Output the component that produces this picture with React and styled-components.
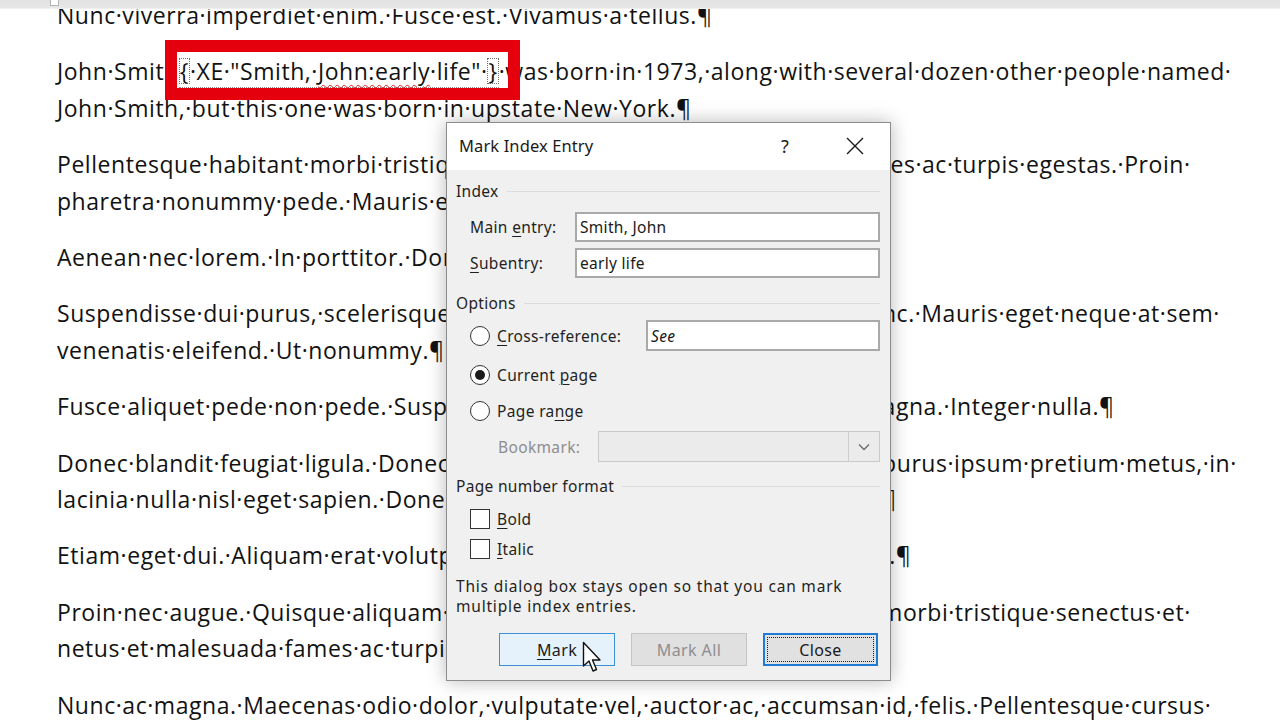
import React from 'react';
import styled, { createGlobalStyle } from 'styled-components';

const Global = createGlobalStyle`
  html, body { margin: 0; padding: 0; background: #fff; }
  body { width: 1280px; height: 720px; overflow: hidden; }
`;

const Screen = styled.div`
  position: relative;
  width: 1280px;
  height: 720px;
  overflow: hidden;
  background: #fff;
  display: flex;
  flex-direction: column;
`;

const RibbonEdge = styled.div`
  flex: none;
  height: 8px;
  background: linear-gradient(#e2e2e2, #e7e7e7);
  border-bottom: 1px solid #efefef;
  position: relative;
  z-index: 2;
  display: flex;
  align-items: flex-start;
`;

const CornerMark = styled.div`
  margin-left: 50px;
  width: 7px;
  height: 5px;
  background: #fff;
  border: 1px solid #b5b5b5;
  border-top: none;
`;

const DocViewport = styled.div`
  flex: 1;
  overflow: hidden;
`;

const Page = styled.div`
  margin-top: -12px;
  padding-left: 57px;
  font-family: "Open Sans", "Noto Sans", sans-serif;
  font-size: 23px;
  letter-spacing: 0.55px;
  line-height: 36.4px;
  color: #121212;
  white-space: nowrap;
`;

const Para = styled.p`
  margin: 0 0 20px;
`;

const Line = styled.span`
  display: block;
`;

const Field = styled.span`
  border-bottom: 1.5px dotted #8a8a8a;
`;

const Brace = styled.span`
  display: inline-block;
  line-height: 26px;
  padding: 0 1px;
  outline: 1px dotted #6f6f6f;
  outline-offset: -1px;
`;

const Misspelt = styled.span`
  text-decoration: underline wavy #e02020;
  text-decoration-thickness: 1px;
  text-underline-offset: 4px;
`;

const Highlight = styled.div`
  position: absolute;
  left: 165px;
  top: 40px;
  width: 355px;
  height: 60px;
  box-sizing: border-box;
  border: 12px solid #e4000c;
  z-index: 3;
`;

const Dialog = styled.div`
  position: absolute;
  left: 446px;
  top: 122px;
  width: 445px;
  height: 559px;
  box-sizing: border-box;
  border: 1px solid #8c8c8c;
  background: #f0f0f0;
  box-shadow: 0 0 18px rgba(0, 0, 0, 0.28);
  z-index: 4;
  display: flex;
  flex-direction: column;
  font-family: "Noto Sans", "Open Sans", sans-serif;
  color: #1a1a1a;
`;

const TitleBar = styled.div`
  flex: none;
  height: 47px;
  background: #fff;
  display: flex;
  align-items: center;
  padding-left: 12px;
`;

const Title = styled.div`
  flex: 1;
  font-size: 16.5px;
  color: #1a1a1a;
  letter-spacing: 0.1px;
  margin-top: -2px;
`;

const TitleButton = styled.div`
  width: ${p => p.$w}px;
  height: 47px;
  display: flex;
  align-items: center;
  justify-content: center;
  font-size: 18px;
  color: #222;
  margin-top: -2px;
`;

const Body = styled.div`
  flex: 1;
  display: flex;
  flex-direction: column;
  padding: 0 10px 0 9px;
`;

const GroupHeader = styled.div`
  height: 20px;
  margin-top: ${p => p.$mt}px;
  display: flex;
  align-items: center;
  gap: 8px;
  font-size: 15.5px;
  letter-spacing: 0.3px;
  color: #1f1f1f;
  &::after {
    content: "";
    flex: 1;
    height: 1px;
    background: #dcdcdc;
  }
`;

const FieldRow = styled.div`
  display: flex;
  align-items: center;
  margin-top: ${p => p.$mt}px;
  padding-left: ${p => p.$pl || 14}px;
`;

const Label = styled.div`
  width: ${p => p.$w}px;
  flex: none;
  font-size: 15.5px;
  letter-spacing: 0.35px;
  color: ${p => (p.$disabled ? '#8d8d8d' : '#1f1f1f')};
`;

const Key = styled.span`
  text-decoration: underline;
  text-underline-offset: 3px;
  text-decoration-thickness: 1px;
`;

const TextBox = styled.div`
  flex: 1;
  height: ${p => p.$h || 30}px;
  box-sizing: border-box;
  background: #fff;
  border: 2px solid #a9a9a9;
  display: flex;
  align-items: center;
  padding-left: 3px;
  font-size: 15.5px;
  letter-spacing: 0.3px;
  font-style: ${p => (p.$italic ? 'italic' : 'normal')};
  color: #1a1a1a;
`;

const Combo = styled.div`
  flex: 1;
  height: 31px;
  box-sizing: border-box;
  background: #ebebeb;
  border: 1px solid #c9c9c9;
  display: flex;
  justify-content: flex-end;
`;

const ComboArrow = styled.div`
  width: 30px;
  border-left: 1px solid #cdcdcd;
  display: flex;
  align-items: center;
  justify-content: center;
`;

const OptionRow = styled.div`
  display: flex;
  align-items: center;
  height: ${p => p.$h}px;
  margin-top: ${p => p.$mt || 0}px;
  padding-left: 14px;
  gap: 7px;
  font-size: 15.5px;
  letter-spacing: 0.35px;
  color: #1f1f1f;
`;

const Radio = styled.div`
  width: 20px;
  height: 20px;
  box-sizing: border-box;
  border-radius: 50%;
  border: 1.5px solid #333;
  background: #fff;
  flex: none;
  display: flex;
  align-items: center;
  justify-content: center;
  &::after {
    content: "";
    width: 10px;
    height: 10px;
    border-radius: 50%;
    background: ${p => (p.$checked ? '#1a1a1a' : 'transparent')};
  }
`;

const Check = styled.div`
  width: 20px;
  height: 20px;
  box-sizing: border-box;
  border: 1.5px solid #333;
  background: #fff;
  flex: none;
`;

const CrossBox = styled.div`
  width: 234px;
  margin-left: auto;
  display: flex;
`;

const Note = styled.div`
  margin-top: 12px;
  font-size: 15.5px;
  line-height: 20px;
  letter-spacing: 0.8px;
  color: #1f1f1f;
`;

const ButtonRow = styled.div`
  margin-top: 17px;
  display: flex;
  justify-content: flex-end;
  gap: 16px;
  padding-right: 2px;
`;

const Button = styled.div`
  position: relative;
  width: ${p => p.$w}px;
  height: 33px;
  box-sizing: border-box;
  display: flex;
  align-items: center;
  justify-content: center;
  font-size: 16px;
  letter-spacing: 0.4px;
  color: ${p => (p.$variant === 'disabled' ? '#8e8e8e' : '#1a1a1a')};
  background: ${p =>
    p.$variant === 'hover' ? '#e5f1fb' : p.$variant === 'disabled' ? '#e0e0e0' : '#e1e1e1'};
  border: ${p =>
    p.$variant === 'hover'
      ? '1.5px solid #3d8fd6'
      : p.$variant === 'disabled'
      ? '1.5px solid #c4c4c4'
      : '2px solid #1f7bd4'};
  &::before {
    content: "";
    display: ${p => (p.$variant === 'default' ? 'block' : 'none')};
    position: absolute;
    inset: 2px;
    border: 1px dotted #222;
  }
`;

const Cursor = styled.svg`
  position: absolute;
  left: 582px;
  top: 641px;
  z-index: 5;
`;

const docParas = [
  ['Nunc·viverra·imperdiet·enim.·Fusce·est.·Vivamus·a·tellus.¶'],
  'john',
  [
    'Pellentesque·habitant·morbi·tristique·senectus·et·netus·et·malesuada·fames·ac·turpis·egestas.·Proin·',
    'pharetra·nonummy·pede.·Mauris·et·orci.¶',
  ],
  ['Aenean·nec·lorem.·In·porttitor.·Donec·laoreet·nonummy·augue.¶'],
  [
    'Suspendisse·dui·purus,·scelerisque·at,·vulputate·vitae,·pretium·mattis,·nunc.·Mauris·eget·neque·at·sem·',
    'venenatis·eleifend.·Ut·nonummy.¶',
  ],
  ['Fusce·aliquet·pede·non·pede.·Suspendisse·dapibus·lorem·pellentesque·magna.·Integer·nulla.¶'],
  [
    'Donec·blandit·feugiat·ligula.·Donec·hendrerit,·felis·et·imperdiet·euismod,·purus·ipsum·pretium·metus,·in·',
    'lacinia·nulla·nisl·eget·sapien.·Donec·ut·est·in·lectus·consequat·consequat.¶',
  ],
  ['Etiam·eget·dui.·Aliquam·erat·volutpat.·Sed·at·lorem·in·nunc·porta·tristique.¶'],
  [
    'Proin·nec·augue.·Quisque·aliquam·tempor·magna.·Pellentesque·habitant·morbi·tristique·senectus·et·',
    'netus·et·malesuada·fames·ac·turpis·egestas.¶',
  ],
  ['Nunc·ac·magna.·Maecenas·odio·dolor,·vulputate·vel,·auctor·ac,·accumsan·id,·felis.·Pellentesque·cursus·'],
];

function JohnPara() {
  return (
    <Para>
      <Line>
        John·Smith
        <Field>
          <Brace>{'{'}</Brace>·XE·"Smith,·<Misspelt>John:early</Misspelt>·life"·<Brace>{'}'}</Brace>
        </Field>
        ·was·born·in·1973,·along·with·several·dozen·other·people·named·
      </Line>
      <Line>John·Smith,·but·this·one·was·born·in·upstate·New·York.¶</Line>
    </Para>
  );
}

function CloseIcon() {
  return (
    <svg width="18" height="18" viewBox="0 0 18 18">
      <path d="M1 1 L17 17 M17 1 L1 17" stroke="#1a1a1a" strokeWidth="1.4" fill="none" />
    </svg>
  );
}

function Chevron() {
  return (
    <svg width="12" height="8" viewBox="0 0 12 8">
      <path d="M1 1.5 L6 6.5 L11 1.5" stroke="#6b6b6b" strokeWidth="1.3" fill="none" />
    </svg>
  );
}

export default function App() {
  return (
    <>
      <Global />
      <Screen>
        <RibbonEdge>
          <CornerMark />
        </RibbonEdge>
        <DocViewport>
          <Page>
            {docParas.map((p, i) =>
              p === 'john' ? (
                <JohnPara key={i} />
              ) : (
                <Para key={i}>
                  {p.map((l, j) => (
                    <Line key={j}>{l}</Line>
                  ))}
                </Para>
              )
            )}
          </Page>
        </DocViewport>

        <Highlight />

        <Dialog>
          <TitleBar>
            <Title>Mark Index Entry</Title>
            <TitleButton $w={70}>?</TitleButton>
            <TitleButton $w={70}>
              <CloseIcon />
            </TitleButton>
          </TitleBar>
          <Body>
            <GroupHeader $mt={11}>Index</GroupHeader>
            <FieldRow $mt={11}>
              <Label $w={105}>
                Main <Key>e</Key>ntry:
              </Label>
              <TextBox>Smith, John</TextBox>
            </FieldRow>
            <FieldRow $mt={6}>
              <Label $w={105}>
                <Key>S</Key>ubentry:
              </Label>
              <TextBox>early life</TextBox>
            </FieldRow>

            <GroupHeader $mt={15}>Options</GroupHeader>
            <OptionRow $h={31} $mt={7}>
              <Radio />
              <span>
                <Key>C</Key>ross-reference:
              </span>
              <CrossBox>
                <TextBox $h={31} $italic>
                  See
                </TextBox>
              </CrossBox>
            </OptionRow>
            <OptionRow $h={26} $mt={11}>
              <Radio $checked />
              <span>
                Current <Key>p</Key>age
              </span>
            </OptionRow>
            <OptionRow $h={26} $mt={10}>
              <Radio />
              <span>
                Page ra<Key>n</Key>ge
              </span>
            </OptionRow>
            <FieldRow $mt={7} $pl={42}>
              <Label $w={100} $disabled>
                Bookmark:
              </Label>
              <Combo>
                <ComboArrow>
                  <Chevron />
                </ComboArrow>
              </Combo>
            </FieldRow>

            <GroupHeader $mt={14}>Page number format</GroupHeader>
            <OptionRow $h={30} $mt={8}>
              <Check />
              <span>
                <Key>B</Key>old
              </span>
            </OptionRow>
            <OptionRow $h={30}>
              <Check />
              <span>
                <Key>I</Key>talic
              </span>
            </OptionRow>

            <Note>
              This dialog box stays open so that you can mark
              <br />
              multiple index entries.
            </Note>

            <ButtonRow>
              <Button $w={116} $variant="hover">
                <span>
                  <Key>M</Key>ark
                </span>
              </Button>
              <Button $w={116} $variant="disabled">
                Mark All
              </Button>
              <Button $w={115} $variant="default">
                Close
              </Button>
            </ButtonRow>
          </Body>
        </Dialog>

        <Cursor width="20" height="34" viewBox="0 0 20 34">
          <path
            d="M1.5 1.5 L1.5 25 L7 20 L11 30 L14.5 28.5 L10.5 19 L18 19 Z"
            fill="#fff"
            stroke="#111"
            strokeWidth="1.4"
            strokeLinejoin="round"
          />
        </Cursor>
      </Screen>
    </>
  );
}
